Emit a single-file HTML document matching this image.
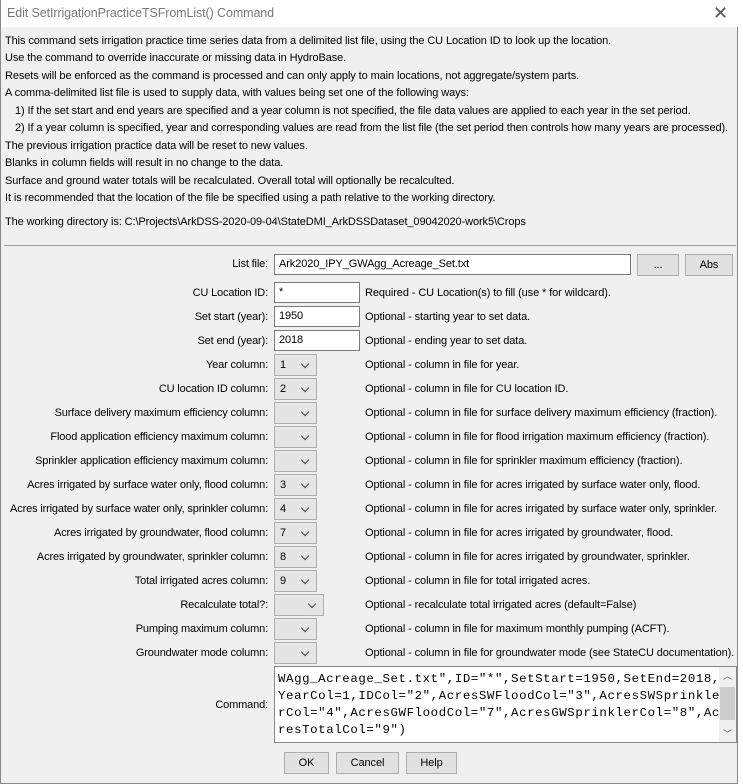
<!DOCTYPE html>
<html><head><meta charset="utf-8"><style>
*{box-sizing:border-box}
body{margin:0;width:743px;height:784px;background:#fff;font-family:"Liberation Sans",sans-serif;font-size:11px;letter-spacing:-0.1px;color:#000;position:relative;overflow:hidden}
.win{position:absolute;left:0;top:0;width:738px;height:784px;background:#f0f0f0;border:1px solid #888;border-top:none}
.title{position:absolute;left:0;top:0;width:737px;height:27px;background:#fff;color:#7a7a7a;font-size:12.5px;padding:6px 0 0 6px}
.x{position:absolute;right:10px;top:3px;font-size:18px;color:#555}
.t{position:absolute;white-space:nowrap}
.lbl{position:absolute;right:469px;white-space:nowrap;letter-spacing:-0.15px}
.in{position:absolute;left:273px;height:21px;background:#fff;border:1px solid #7a7a7a;padding:3px 4px;white-space:nowrap}
.dd{position:absolute;left:273px;width:43px;height:22px;background:#e5e5e5;border:1px solid #adadad;padding:4px 5px}
.dd:after{content:"";position:absolute;right:8px;top:6px;width:5px;height:5px;border-right:1px solid #444;border-bottom:1px solid #444;transform:rotate(45deg)}
.btn{position:absolute;height:22px;background:#e1e1e1;border:1px solid #adadad;text-align:center;padding-top:4px}
.d{position:absolute;left:364px;white-space:nowrap}
</style></head><body>
<div class="win">
<div class="title">Edit SetIrrigationPracticeTSFromList() Command<span class="x">✕</span></div>
<div class="t" style="left:4px;top:35px">This command sets irrigation practice time series data from a delimited list file, using the CU Location ID to look up the location.</div>
<div class="t" style="left:4px;top:52px">Use the command to override inaccurate or missing data in HydroBase.</div>
<div class="t" style="left:4px;top:70px">Resets will be enforced as the command is processed and can only apply to main locations, not aggregate/system parts.</div>
<div class="t" style="left:4px;top:87px">A comma-delimited list file is used to supply data, with values being set one of the following ways:</div>
<div class="t" style="left:14px;top:105px">1) If the set start and end years are specified and a year column is not specified, the file data values are applied to each year in the set period.</div>
<div class="t" style="left:14px;top:122px">2) If a year column is specified, year and corresponding values are read from the list file (the set period then controls how many years are processed).</div>
<div class="t" style="left:4px;top:140px">The previous irrigation practice data will be reset to new values.</div>
<div class="t" style="left:4px;top:157px">Blanks in column fields will result in no change to the data.</div>
<div class="t" style="left:4px;top:175px">Surface and ground water totals will be recalculated.  Overall total will optionally be recalculted.</div>
<div class="t" style="left:4px;top:192px">It is recommended that the location of the file be specified using a path relative to the working directory.</div>
<div class="t" style="left:4px;top:216px">The working directory is: C:\Projects\ArkDSS-2020-09-04\StateDMI_ArkDSSDataset_09042020-work5\Crops</div>
<div style="position:absolute;left:3px;top:245px;width:732px;height:1px;background:#a0a0a0"></div>

<div class="lbl" style="top:258px">List file:</div>
<div class="in" style="top:254px;width:357px">Ark2020_IPY_GWAgg_Acreage_Set.txt</div>
<div class="btn" style="left:636px;top:254px;width:42px">...</div>
<div class="btn" style="left:684px;top:254px;width:48px">Abs</div>

<div class="lbl" style="top:287px">CU Location ID:</div><div class="in" style="top:282px;width:86px">*</div><div class="d" style="top:287px">Required - CU Location(s) to fill (use * for wildcard).</div>
<div class="lbl" style="top:311px">Set start (year):</div><div class="in" style="top:306px;width:86px">1950</div><div class="d" style="top:311px">Optional - starting year to set data.</div>
<div class="lbl" style="top:335px">Set end (year):</div><div class="in" style="top:330px;width:86px">2018</div><div class="d" style="top:335px">Optional - ending year to set data.</div>

<div class="lbl" style="top:359px">Year column:</div><div class="dd" style="top:354px">1</div><div class="d" style="top:359px">Optional - column in file for year.</div>
<div class="lbl" style="top:383px">CU location ID column:</div><div class="dd" style="top:378px">2</div><div class="d" style="top:383px">Optional - column in file for CU location ID.</div>
<div class="lbl" style="top:407px">Surface delivery maximum efficiency column:</div><div class="dd" style="top:402px"></div><div class="d" style="top:407px">Optional - column in file for surface delivery maximum efficiency (fraction).</div>
<div class="lbl" style="top:431px">Flood application efficiency maximum column:</div><div class="dd" style="top:426px"></div><div class="d" style="top:431px">Optional - column in file for flood irrigation maximum efficiency (fraction).</div>
<div class="lbl" style="top:455px">Sprinkler application efficiency maximum column:</div><div class="dd" style="top:450px"></div><div class="d" style="top:455px">Optional - column in file for sprinkler maximum efficiency (fraction).</div>
<div class="lbl" style="top:479px">Acres irrigated by surface water only, flood column:</div><div class="dd" style="top:474px">3</div><div class="d" style="top:479px">Optional - column in file for acres irrigated by surface water only, flood.</div>
<div class="lbl" style="top:503px">Acres irrigated by surface water only, sprinkler column:</div><div class="dd" style="top:498px">4</div><div class="d" style="top:503px">Optional - column in file for acres irrigated by surface water only, sprinkler.</div>
<div class="lbl" style="top:527px">Acres irrigated by groundwater, flood column:</div><div class="dd" style="top:522px">7</div><div class="d" style="top:527px">Optional - column in file for acres irrigated by groundwater, flood.</div>
<div class="lbl" style="top:551px">Acres irrigated by groundwater, sprinkler column:</div><div class="dd" style="top:546px">8</div><div class="d" style="top:551px">Optional - column in file for acres irrigated by groundwater, sprinkler.</div>
<div class="lbl" style="top:575px">Total irrigated acres column:</div><div class="dd" style="top:570px">9</div><div class="d" style="top:575px">Optional - column in file for total irrigated acres.</div>
<div class="lbl" style="top:599px">Recalculate total?:</div><div class="dd" style="top:594px;width:50px"></div><div class="d" style="top:599px">Optional - recalculate total irrigated acres (default=False)</div>
<div class="lbl" style="top:623px">Pumping maximum column:</div><div class="dd" style="top:618px"></div><div class="d" style="top:623px">Optional - column in file for maximum monthly pumping (ACFT).</div>
<div class="lbl" style="top:647px">Groundwater mode column:</div><div class="dd" style="top:642px"></div><div class="d" style="top:647px">Optional - column in file for groundwater mode (see StateCU documentation).</div>

<div class="lbl" style="top:699px">Command:</div>
<div style="position:absolute;left:273px;top:666px;width:463px;height:77px;background:#fff;border:1px solid #828790;overflow:hidden">
<div style="position:absolute;left:3px;top:-13px;width:440px;font-family:'Liberation Mono',monospace;font-size:12.4px;line-height:17px;letter-spacing:0.6px;white-space:pre">_ _ _ _ _ _ _ _ _ _ _ _ _ _ _ _ _ _ _ _ _ _ _ _ _
WAgg_Acreage_Set.txt",ID="*",SetStart=1950,SetEnd=2018,
YearCol=1,IDCol="2",AcresSWFloodCol="3",AcresSWSprinkle
rCol="4",AcresGWFloodCol="7",AcresGWSprinklerCol="8",Ac
resTotalCol="9")</div>
<div style="position:absolute;right:0;top:0;width:17px;height:75px;background:#f0f0f0"></div>
<div style="position:absolute;right:1px;top:20px;width:15px;height:33px;background:#cdcdcd"></div>
<div style="position:absolute;right:4px;top:2px;font-size:9px;color:#555">︿</div>
<div style="position:absolute;right:4px;top:60px;font-size:9px;color:#555">﹀</div>
</div>

<div class="btn" style="left:283px;top:752px;width:45px">OK</div>
<div class="btn" style="left:335px;top:752px;width:63px">Cancel</div>
<div class="btn" style="left:405px;top:752px;width:51px">Help</div>
</div>
</body></html>
